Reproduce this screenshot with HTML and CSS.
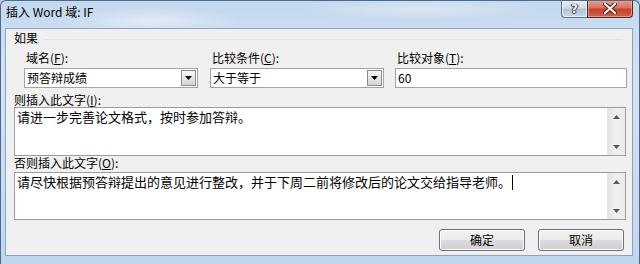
FILE: index.html
```html
<!DOCTYPE html>
<html lang="zh-CN">
<head>
<meta charset="utf-8">
<title>插入 Word 域: IF</title>
<link rel="stylesheet" href="styles.css">
</head>
<body>
<div class="window">
  <div class="titlebar">
    <span class="title">插入 Word 域: IF</span>
    <div class="caption">
      <div class="cbtn help"><span class="help-glyph">?</span></div>
      <div class="cbtn close">
        <svg width="14" height="11" viewBox="0 0 14 11">
          <path d="M2 1 L12 10 M12 1 L2 10" stroke="#5a1e18" stroke-width="4" stroke-linecap="square"/>
          <path d="M2 1 L12 10 M12 1 L2 10" stroke="#ffffff" stroke-width="2" stroke-linecap="square"/>
        </svg>
      </div>
    </div>
  </div>
  <div class="client">
    <div class="group-head"><span>如果</span><span class="group-line"></span></div>
    <div class="fields">
      <div class="field">
        <div class="flabel">域名(<u>F</u>):</div>
        <div class="combo">
          <span class="combo-text">预答辩成绩</span>
          <span class="drop"><svg width="7" height="4" viewBox="0 0 7 4"><path d="M0 0 H7 L3.5 4 Z" fill="#000"/></svg></span>
        </div>
      </div>
      <div class="field">
        <div class="flabel">比较条件(<u>C</u>):</div>
        <div class="combo">
          <span class="combo-text">大于等于</span>
          <span class="drop"><svg width="7" height="4" viewBox="0 0 7 4"><path d="M0 0 H7 L3.5 4 Z" fill="#000"/></svg></span>
        </div>
      </div>
      <div class="field">
        <div class="flabel">比较对象(<u>T</u>):</div>
        <div class="combo edit"><span class="combo-text">60</span></div>
      </div>
    </div>
    <div class="label">则插入此文字(<u>I</u>):</div>
    <div class="memo memo1">
      <div class="memo-text">请进一步完善论文格式，按时参加答辩。</div>
      <div class="vscroll">
        <span class="arrow"><svg width="7" height="4" viewBox="0 0 7 4"><path d="M3.5 0 L7 4 H0 Z" fill="#5a5a5a"/></svg></span>
        <span class="arrow"><svg width="7" height="4" viewBox="0 0 7 4"><path d="M0 0 H7 L3.5 4 Z" fill="#5a5a5a"/></svg></span>
      </div>
    </div>
    <div class="label label2">否则插入此文字(<u>O</u>):</div>
    <div class="memo memo2">
      <div class="memo-text">请尽快根据预答辩提出的意见进行整改，并于下周二前将修改后的论文交给指导老师。<span class="caret"></span></div>
      <div class="vscroll">
        <span class="arrow"><svg width="7" height="4" viewBox="0 0 7 4"><path d="M3.5 0 L7 4 H0 Z" fill="#5a5a5a"/></svg></span>
        <span class="arrow"><svg width="7" height="4" viewBox="0 0 7 4"><path d="M0 0 H7 L3.5 4 Z" fill="#5a5a5a"/></svg></span>
      </div>
    </div>
    <div class="buttons">
      <button class="btn">确定</button>
      <button class="btn">取消</button>
    </div>
  </div>
</div>
</body>
</html>
```
FILE: styles.css
```css
html, body {
  margin: 0;
  padding: 0;
}
body {
  width: 640px;
  height: 264px;
  overflow: hidden;
  font-family: "Noto Sans CJK SC", "Liberation Sans", sans-serif;
  font-size: 12px;
  color: #000;
  background: #b9cfe8;
}
.window {
  box-sizing: border-box;
  width: 640px;
  height: 264px;
  border: 1px solid #4f6986;
  border-bottom: none;
  border-radius: 6px 6px 0 0;
  background:
    radial-gradient(ellipse 90px 14px at 150px 20px, rgba(255,255,255,0.45), rgba(255,255,255,0) 100%),
    radial-gradient(ellipse 120px 12px at 420px 8px, rgba(255,255,255,0.35), rgba(255,255,255,0) 100%),
    linear-gradient(180deg, #c4d8ee 0%, #d3e3f4 30%, #c1d6ed 100%);
  display: flex;
  flex-direction: column;
  overflow: hidden;
}
.titlebar {
  height: 27px;
  display: flex;
  align-items: flex-start;
  padding: 0 6px 0 5px;
}
.title {
  line-height: 22px;
  font-size: 12px;
  color: #000;
}
.caption {
  margin-left: auto;
  margin-top: -1px;
  display: flex;
}
.cbtn {
  box-sizing: border-box;
  height: 18px;
  display: flex;
  align-items: center;
  justify-content: center;
  border: 1px solid #5d7089;
  border-top: none;
}
.help {
  width: 26px;
  border-right: none;
  border-radius: 0 0 0 4px;
  background: linear-gradient(180deg, #e6edf4 0%, #d2dde9 45%, #b5c4d5 55%, #c9d6e4 100%);
  box-shadow: inset 0 0 0 1px rgba(255,255,255,0.6);
}
.help-glyph {
  font-family: "DejaVu Sans", sans-serif;
  font-weight: bold;
  font-size: 12px;
  line-height: 14px;
  color: #f4f7fa;
  text-shadow: 0 0 1px #34475f, 0 0 1px #34475f, 1px 0 0 #34475f, -1px 0 0 #34475f, 0 1px 0 #34475f;
}
.close {
  width: 46px;
  border-color: #5a2520;
  border-radius: 0 0 4px 0;
  background: linear-gradient(180deg, #e8a596 0%, #d7715f 45%, #c5402b 55%, #d0604a 100%);
  box-shadow: inset 0 0 0 1px rgba(255,210,200,0.5);
}
.client {
  box-sizing: border-box;
  margin-left: 4px;
  width: 628px;
  height: 228px;
  background: #f0f0f0;
  border: 1px solid #8aa3c0;
  display: flex;
  flex-direction: column;
}
.group-head {
  display: flex;
  align-items: center;
  height: 14px;
  line-height: 14px;
  margin: 2px 9px 0 8px;
}
.group-line {
  flex: 1;
  height: 1px;
  margin-left: 6px;
  margin-top: 3px;
  background: #e2e2e2;
}
.fields {
  display: grid;
  grid-template-columns: 174px 174px 231px;
  column-gap: 12px;
  margin: 6px 0 0 18px;
}
.field:nth-child(3) {
  margin-left: -1px;
}
.flabel {
  line-height: 14px;
  height: 14px;
  padding-left: 2px;
}
.combo {
  box-sizing: border-box;
  margin-top: 3px;
  height: 20px;
  background: #fff;
  border: 1px solid #a3a3a3;
  display: flex;
  align-items: stretch;
}
.combo-text {
  flex: 1;
  padding-left: 2px;
  line-height: 18px;
  font-size: 12px;
}
.drop {
  box-sizing: border-box;
  width: 15px;
  margin: 1px;
  border: 1px solid #8c8c8c;
  background: linear-gradient(180deg, #f6f6f6 0%, #e6e6e6 50%, #d6d6d6 100%);
  display: flex;
  align-items: center;
  justify-content: center;
}
.label {
  line-height: 14px;
  height: 14px;
  margin: 5px 0 0 8px;
}
.label2 {
  margin-top: 0;
}
.memo {
  box-sizing: border-box;
  margin: 0 6px 0 8px;
  height: 49px;
  background: #fff;
  border: 1px solid #9c9c9c;
  display: flex;
}
.memo2 {
  margin-top: 2px;
  height: 48px;
}
.memo-text {
  flex: 1;
  font-size: 13px;
  line-height: 18px;
  padding-left: 2px;
  white-space: nowrap;
}
.caret {
  display: inline-block;
  width: 1px;
  height: 15px;
  background: #000;
  vertical-align: -3px;
  margin-left: 1px;
}
.vscroll {
  width: 17px;
  background: linear-gradient(90deg, #e4e4e4 0%, #f0f0f0 40%, #ececec 100%);
  border-left: 1px solid #e6e6e6;
  display: flex;
  flex-direction: column;
  justify-content: space-between;
}
.arrow {
  height: 17px;
  display: flex;
  align-items: center;
  justify-content: center;
}
.buttons {
  display: flex;
  justify-content: flex-end;
  gap: 13px;
  margin-top: 9px;
  padding-right: 8px;
}
.btn {
  box-sizing: border-box;
  width: 86px;
  height: 22px;
  padding: 0;
  font-family: "Noto Sans CJK SC", sans-serif;
  font-size: 12px;
  line-height: 18px;
  color: #000;
  border: 1px solid #707070;
  border-radius: 3px;
  background: linear-gradient(180deg, #f2f2f2 0%, #ebebeb 50%, #dddddd 50%, #cfcfcf 100%);
  box-shadow: inset 0 0 0 1px #fbfbfb;
}
```
